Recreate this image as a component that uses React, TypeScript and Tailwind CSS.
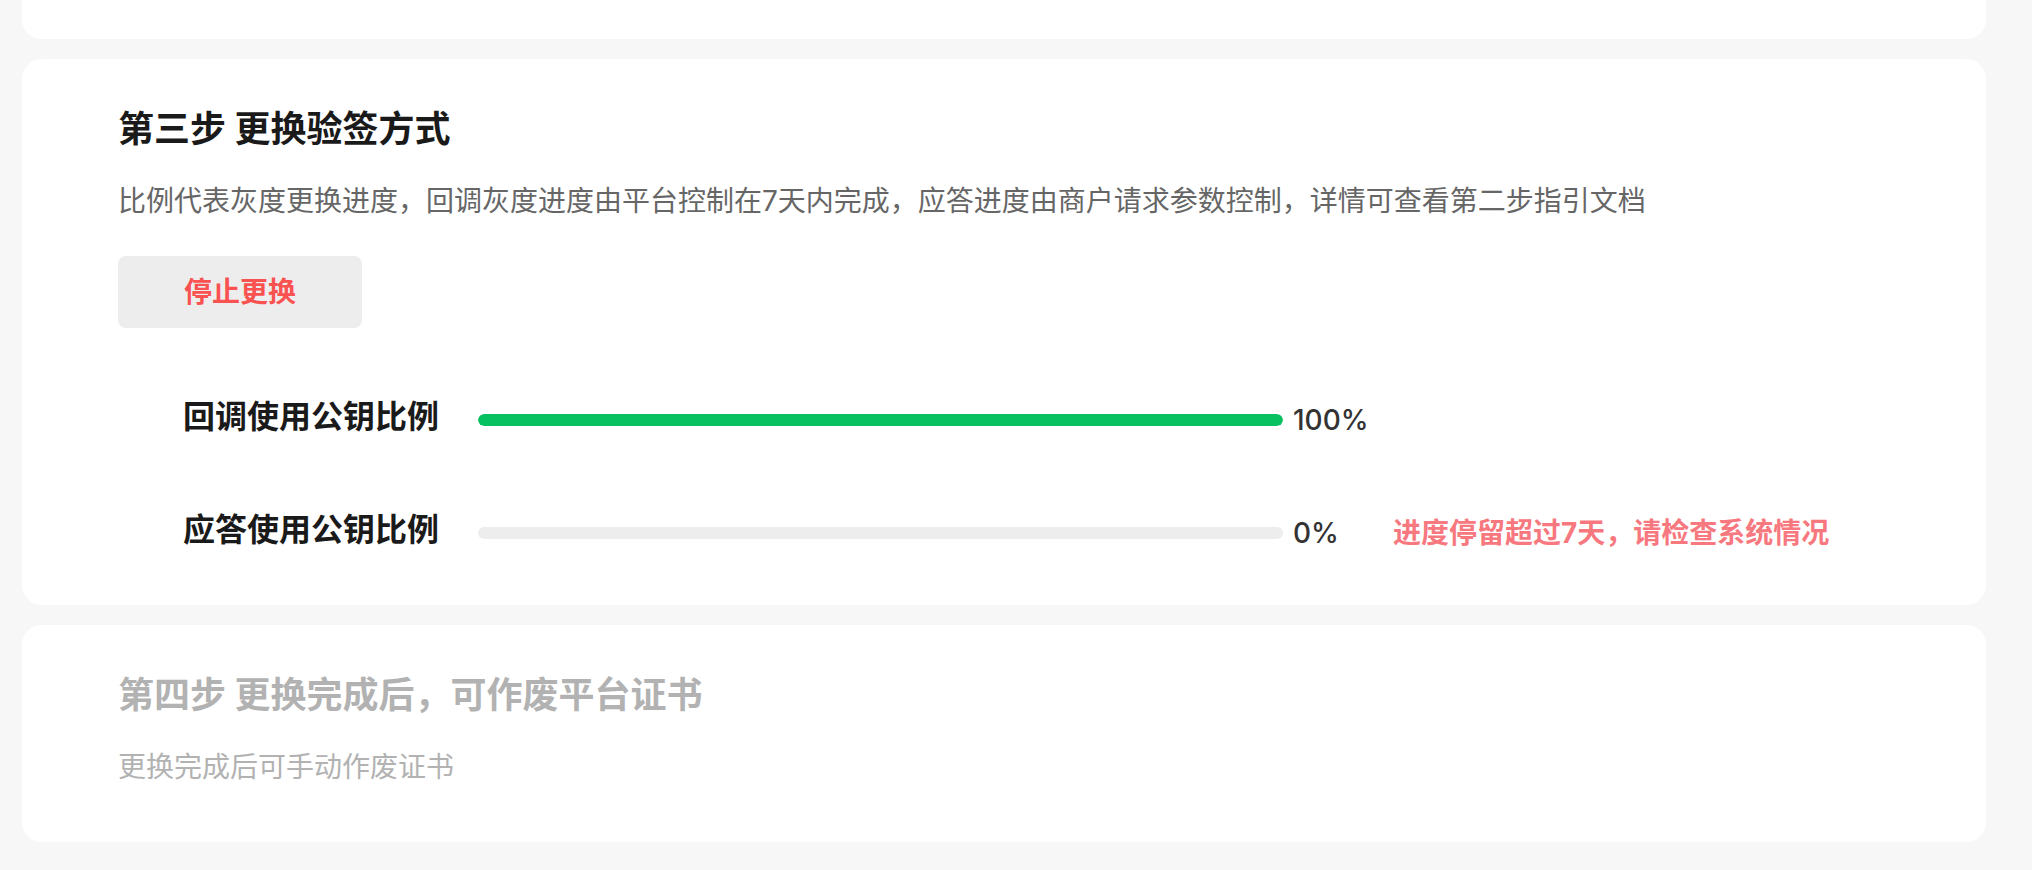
import React from 'react';

const font = { fontFamily: '"Inter", "Noto Sans CJK SC", sans-serif' };

type Row = {
  label: string;
  value: number;
  warning?: string;
};

const rows: Row[] = [
  { label: '回调使用公钥比例', value: 100 },
  { label: '应答使用公钥比例', value: 0, warning: '进度停留超过7天，请检查系统情况' },
];

const ProgressRow: React.FC<{ row: Row }> = ({ row }) => (
  <div className="flex items-center h-[50px]">
    <div className="w-[295px] text-[32px] leading-[50px] font-bold text-[#1a1a1a] -mt-[6px]">
      {row.label}
    </div>
    <div className="w-[805px] h-[12px] rounded-full bg-[#ededed] overflow-hidden">
      <div className="h-full rounded-full bg-[#07c160]" style={{ width: `${row.value}%` }} />
    </div>
    <div className="w-[110px] pl-[10px] text-[28px] leading-[40px] font-medium text-[#333333]">{row.value}%</div>
    {row.warning && (
      <div className="text-[28px] leading-[40px] font-bold text-[#f7787e]">{row.warning}</div>
    )}
  </div>
);

export default function App() {
  return (
    <div className="min-h-screen bg-[#f7f7f7] pl-[22px] pr-[46px] pb-[28px]" style={font}>
      <div className="h-[39px] bg-white rounded-b-[20px]" />

      <div className="mt-[20px] bg-white rounded-[20px] pl-[96px] pt-[45px] pb-[47px]">
        <h2 className="text-[36px] leading-[50px] font-bold text-[#1a1a1a]">第三步 更换验签方式</h2>
        <p className="mt-[27px] text-[28px] leading-[40px] text-[#666666]">
          比例代表灰度更换进度，回调灰度进度由平台控制在7天内完成，应答进度由商户请求参数控制，详情可查看第二步指引文档
        </p>
        <button className="mt-[35px] w-[244px] h-[72px] rounded-[8px] bg-[#ededed] text-[28px] font-semibold text-[#fa5151]">
          停止更换
        </button>
        <div className="mt-[67px] pl-[65px] flex flex-col gap-[63px]">
          {rows.map((r) => (
            <ProgressRow key={r.label} row={r} />
          ))}
        </div>
      </div>

      <div className="mt-[20px] bg-white rounded-[20px] pl-[96px] pt-[45px] pb-[55px]">
        <h2 className="text-[36px] leading-[50px] font-bold text-[#b2b2b2]">第四步 更换完成后，可作废平台证书</h2>
        <p className="mt-[27px] text-[28px] leading-[40px] text-[#b2b2b2]">更换完成后可手动作废证书</p>
      </div>
    </div>
  );
}
